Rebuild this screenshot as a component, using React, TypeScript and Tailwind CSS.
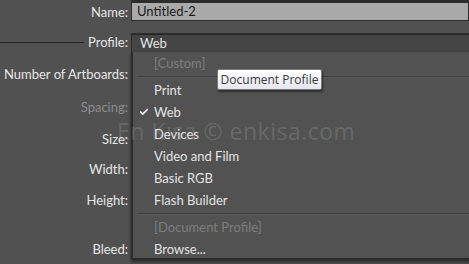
import { Check } from "lucide-react";

const menuItems: { label: string; disabled?: boolean; checked?: boolean; sep?: boolean }[] = [
  { label: "[Custom]", disabled: true },
  { label: "", sep: true },
  { label: "Print" },
  { label: "Web", checked: true },
  { label: "Devices" },
  { label: "Video and Film" },
  { label: "Basic RGB" },
  { label: "Flash Builder" },
  { label: "", sep: true },
  { label: "[Document Profile]", disabled: true },
  { label: "Browse..." },
];

function Label({ text, dim }: { text: string; dim?: boolean }) {
  return (
    <div
      className={`w-[131px] shrink-0 pr-[3px] text-right whitespace-nowrap ${
        dim ? "text-[#8c8c8c]" : "text-[#e6e6e6]"
      }`}
    >
      {text}
    </div>
  );
}

export default function App() {
  return (
    <div
      className="relative w-[469px] h-[264px] overflow-hidden bg-[#515151] text-[13px] leading-none"
      style={{ fontFamily: 'Lato, "Open Sans", sans-serif' }}
    >
      <div className="flex flex-col">
        {/* Name */}
        <div className="flex h-[24px] items-center">
          <Label text="Name:" />
          <div className="flex-1 self-start h-[21px] border border-[#2c2c2c] border-t-[3px] bg-[#a9a9a9] pl-[5px] flex items-center text-[#1c1c1c]">
            Untitled-2
          </div>
        </div>

        {/* Profile */}
        <div className="flex h-[24px] mt-[6px] items-center">
          <div className="w-[131px] shrink-0 flex items-center pr-[3px] text-[#e6e6e6]">
            <div className="h-px w-[84px] bg-[#262626]" />
            <span className="ml-auto">Profile:</span>
          </div>
          <div className="flex-1 self-end h-[21px] border-y-2 border-l border-[#2a2a2a] bg-[#454545] pl-[8px] flex items-center text-[#e2e2e2]">
            Web
          </div>
        </div>

        <div className="flex h-[24px] mt-[8px] items-center">
          <Label text="Number of Artboards:" />
        </div>
        <div className="flex h-[24px] mt-[9px] items-center">
          <Label text="Spacing:" dim />
        </div>
        <div className="flex h-[24px] mt-[8px] items-center">
          <Label text="Size:" />
        </div>
        <div className="flex h-[24px] mt-[6px] items-center">
          <Label text="Width:" />
        </div>
        <div className="flex h-[24px] mt-[7px] items-center">
          <Label text="Height:" />
        </div>
        <div className="flex h-[24px] mt-[25px] items-center">
          <Label text="Bleed:" />
        </div>
      </div>

      {/* dropdown menu */}
      <div className="absolute left-[131px] top-[52px] w-[340px] h-[208px] bg-[#525252] border-l-2 border-b-2 border-[#2b2b2b] shadow-[0_2px_3px_rgba(0,0,0,0.5)]">
        {menuItems.map((item, i) =>
          item.sep ? (
            <div key={i} className="h-[5px] flex items-center pl-[4px]">
              <div className="w-full h-[2px] border-t border-[#3e3e3e] border-b border-b-[#5a5a5a]" />
            </div>
          ) : (
            <div
              key={i}
              className={`relative h-[22px] flex items-center pl-[21px] whitespace-nowrap ${
                item.disabled ? "text-[#7e7e7e]" : "text-[#e4e4e4]"
              }`}
            >
              {item.checked && (
                <Check className="absolute left-[6px] top-[6px] w-[10px] h-[10px] text-[#f0f0f0]" strokeWidth={4} />
              )}
              {item.label}
            </div>
          )
        )}
      </div>

      {/* watermark */}
      <div
        className="absolute left-[117px] top-[120px] text-[23px] text-white/15 tracking-[0.5px] whitespace-nowrap"
        style={{ fontFamily: '"Open Sans", sans-serif' }}
      >
        En Kısa © enkisa.com
      </div>

      {/* tooltip */}
      <div
        className="absolute left-[217px] top-[69px] w-[105px] h-[21px] rounded-[2px] border border-[#7a7a7a] bg-gradient-to-b from-[#ffffff] to-[#e6e6ee] shadow-[1px_2px_2px_rgba(0,0,0,0.45)] flex items-center justify-center text-[12px] text-[#3a3a3a]"
        style={{ fontFamily: '"Open Sans", sans-serif' }}
      >
        Document Profile
      </div>
    </div>
  );
}
